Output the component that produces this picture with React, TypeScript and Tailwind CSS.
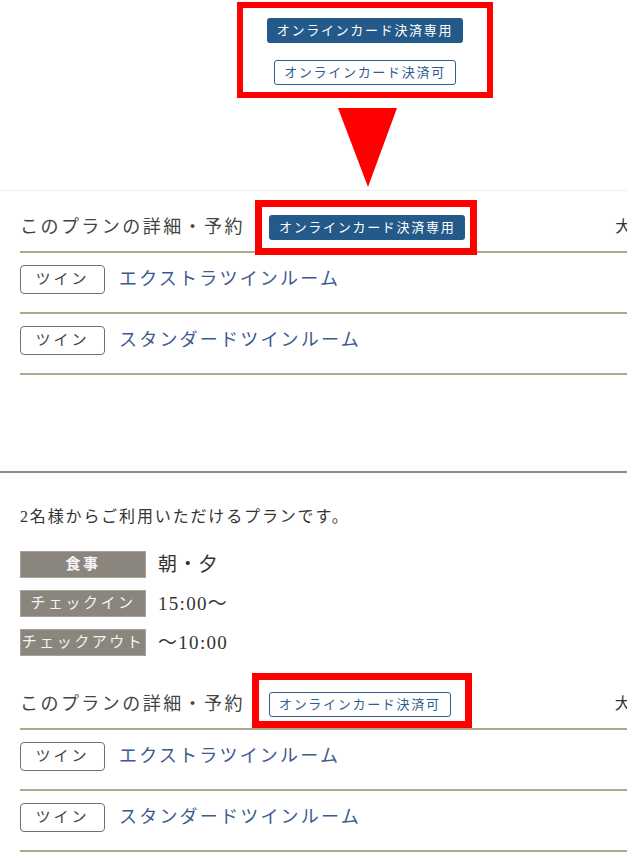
const jp = "font-['Liberation_Serif','Noto_Sans_CJK_JP',serif]";

function FilledBadge() {
  return (
    <span className="inline-flex h-[25px] shrink-0 items-center whitespace-nowrap rounded-[3px] bg-[#245a89] px-[10px] text-[13px] leading-none tracking-[1.7px] text-white">
      オンラインカード決済専用
    </span>
  );
}

function OutlineBadge() {
  return (
    <span className="inline-flex h-[25px] shrink-0 items-center whitespace-nowrap rounded-[3px] border border-[#2f5e8c] bg-white px-[9px] text-[13px] leading-none tracking-[1.7px] text-[#2f5e8c]">
      オンラインカード決済可
    </span>
  );
}

function RoomRow({ name }: { name: string }) {
  return (
    <div className="flex h-[61px] items-start gap-[14px] border-b-2 border-[#b1a68e] pt-[12px]">
      <span className="flex h-[29px] w-[85px] shrink-0 items-center justify-center rounded-[4px] border-[1.5px] border-[#707070] text-[15px] tracking-[3px] text-[#444]">
        ツイン
      </span>
      <span className="whitespace-nowrap text-[18px] leading-[28px] tracking-[2.2px] text-[#3c5a8f]">{name}</span>
    </div>
  );
}

function PlanHeading({ badge, gap, box, height }: { badge: React.ReactNode; gap: string; box: string; height: string }) {
  return (
    <div className={`flex items-end border-b-2 border-[#b1a68e] pb-[12px] ${height}`}>
      <h3 className="shrink-0 whitespace-nowrap text-[18px] leading-[24px] tracking-[2.45px] text-[#444]">このプランの詳細・予約</h3>
      <div className="relative ml-[24px] flex h-[24px] shrink-0 items-center">
        {badge}
        <div className={`absolute border-[7px] border-[#ff0000] ${box}`} />
      </div>
      <span className={`shrink-0 whitespace-nowrap text-[16px] leading-[24px] text-[#333] ${gap}`}>大人1名</span>
    </div>
  );
}

export default function App() {
  return (
    <div className={`w-[627px] overflow-hidden bg-white ${jp}`}>
      {/* legend */}
      <div className="h-[190px] pt-[2px]">
        <div className="ml-[237px] flex h-[96px] w-[256px] flex-col items-center gap-[17px] border-[6px] border-[#ff0000] pt-[10px]">
          <FilledBadge />
          <OutlineBadge />
        </div>
        <svg className="ml-[338px] mt-[10px]" width="59" height="79" viewBox="0 0 59 79">
          <polygon points="0,0 59,0 30,79" fill="#ff0000" />
        </svg>
      </div>

      {/* before */}
      <div className="border-t border-[#efefef] pl-[20px]">
        <PlanHeading
          badge={<FilledBadge />}
          gap="ml-[150px]"
          height="h-[62px]"
          box="-left-[14px] -right-[12px] -top-[15px] -bottom-[16px]"
        />
        <RoomRow name="エクストラツインルーム" />
        <RoomRow name="スタンダードツインルーム" />
      </div>

      {/* after */}
      <div className="mt-[96px] border-t-2 border-[#8c8c8c] pl-[20px]">
        <p className="whitespace-nowrap pt-[32px] text-[16px] leading-[24px] tracking-[1.85px] text-[#333]">
          2名様からご利用いただけるプランです。
        </p>
        <div className="mt-[22px] flex flex-col gap-[12px]">
          {[
            ["食事", "朝・夕", "font-bold"],
            ["チェックイン", "15:00〜", ""],
            ["チェックアウト", "〜10:00", ""],
          ].map(([label, value, weight]) => (
            <div key={label} className="flex h-[27px] items-center gap-[12px]">
              <span
                className={`flex h-[27px] w-[126px] shrink-0 items-center justify-center whitespace-nowrap border border-[#a6a29a] bg-[#8a867d] text-[15px] tracking-[2.5px] text-[#f4f4f4] ${weight}`}
              >
                {label}
              </span>
              <span className="text-[19px] leading-none tracking-[1.3px] text-[#333]">{value}</span>
            </div>
          ))}
        </div>
        <PlanHeading
          badge={<OutlineBadge />}
          gap="ml-[164px]"
          height="h-[74px]"
          box="-left-[17px] -right-[21px] -top-[19px] -bottom-[12px]"
        />
        <RoomRow name="エクストラツインルーム" />
        <RoomRow name="スタンダードツインルーム" />
      </div>
    </div>
  );
}
